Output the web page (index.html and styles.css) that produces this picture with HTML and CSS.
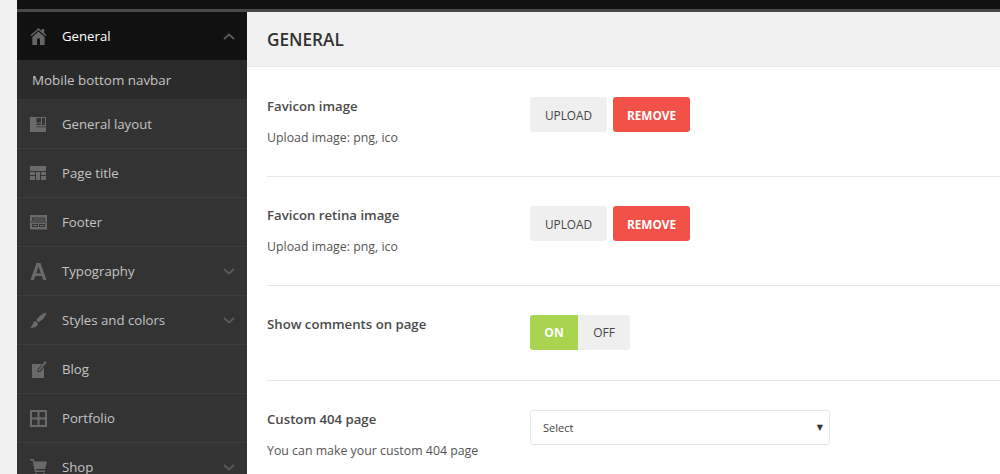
FILE: index.html
```html
<!DOCTYPE html>
<html lang="en">
<head>
<meta charset="utf-8">
<title>General</title>
<link rel="stylesheet" href="styles.css">
</head>
<body>
<div class="shell">
  <div class="topbar"></div>
  <div class="columns">
    <nav class="sidebar">
      <div class="nav-item active">
        <svg class="icon" viewBox="0 0 17 18"><path d="M8.5 0 L0 7.6 L1 8.8 L8.5 2.2 L16 8.8 L17 7.6 L14.5 5.4 V1 H12 V3.2 Z"/><path fill-rule="evenodd" d="M8.5 3.6 L2 9.4 V18 H15 V9.4 Z M7 11 H10 V18 H7 Z"/></svg>
        <span class="nav-label">General</span>
        <svg class="chev" viewBox="0 0 12 7"><path d="M1 6 L6 1.5 L11 6"/></svg>
      </div>
      <div class="sub-item">Mobile bottom navbar</div>
      <div class="nav-item">
        <svg class="icon" viewBox="0 0 17 17"><path fill-rule="evenodd" d="M0 1 H16 V16 H0 Z M6.5 2 V6.5 H11 V2 Z M12 2 V9 H15 V2 Z M6.5 7.5 V9 H11 V7.5 Z M6 10.5 V11.3 H16 V10.5 Z"/></svg>
        <span class="nav-label">General layout</span>
      </div>
      <div class="nav-item">
        <svg class="icon" viewBox="0 0 17 17"><path d="M0 1 H16 V6 H0 Z M0 7 H5 V10 H0 Z M0 11 H5 V15 H0 Z M6 7 H10 V15 H6 Z M11 7 H16 V10 H11 Z M11 11 H16 V15 H11 Z"/></svg>
        <span class="nav-label">Page title</span>
      </div>
      <div class="nav-item">
        <svg class="icon" viewBox="0 0 17 17"><path fill-rule="evenodd" d="M0 1 H17 V15.5 H0 Z M2 3.5 V6.5 H15 V3.5 Z M0.8 7.6 V8.4 H16.2 V7.6 Z M2 10 V13 H8 V10 Z M9 10 V13 H15 V10 Z"/><path d="M3 4.5 H14 V5.5 H3 Z M3 11 H7 V12 H3 Z M10 11 H14 V12 H10 Z"/></svg>
        <span class="nav-label">Footer</span>
      </div>
      <div class="nav-item">
        <svg class="icon" viewBox="0 0 17 17"><path fill-rule="evenodd" d="M6.5 0 H10.5 L16.5 17 H13.2 L11.8 13 H5.2 L3.8 17 H0.5 Z M8.5 3.6 L6.2 10.2 H10.8 Z"/></svg>
        <span class="nav-label">Typography</span>
        <svg class="chev" viewBox="0 0 12 7"><path d="M1 1 L6 5.5 L11 1"/></svg>
      </div>
      <div class="nav-item">
        <svg class="icon" viewBox="0 0 17 17"><path d="M16.5 0.5 C12.5 1.5 8.5 4.5 6.3 8.3 L8.6 10.3 C12.2 8.5 15.5 4.5 16.5 0.5 Z"/><path d="M5.4 9 C2.8 9.6 3 13.5 0 15.5 C3.6 16.4 8 15 7.8 11 Z"/></svg>
        <span class="nav-label">Styles and colors</span>
        <svg class="chev" viewBox="0 0 12 7"><path d="M1 1 L6 5.5 L11 1"/></svg>
      </div>
      <div class="nav-item">
        <svg class="icon" viewBox="0 0 17 17"><path d="M2 3 H12 L7.5 8.5 V11 H10 L14 6.5 V17 H2 Z"/><path d="M15 0 L16.7 1.3 L9.7 10 H8.5 V8.7 Z"/></svg>
        <span class="nav-label">Blog</span>
      </div>
      <div class="nav-item">
        <svg class="icon" viewBox="0 0 17 17"><path fill-rule="evenodd" d="M0 0 H17 V17 H0 Z M2 2 V7.5 H7.5 V2 Z M9.5 2 V7.5 H15 V2 Z M2 9.5 V15 H7.5 V9.5 Z M9.5 9.5 V15 H15 V9.5 Z"/></svg>
        <span class="nav-label">Portfolio</span>
      </div>
      <div class="nav-item">
        <svg class="icon" viewBox="0 0 17 17"><path d="M0 0 H3.5 L4.3 2.5 H17 L15 10 H5.8 L6.2 11.5 H15 V13 H5 L2.5 1.5 H0 Z"/><path d="M5 14 H7 V17 H5 Z M13 14 H15 V17 H13 Z"/></svg>
        <span class="nav-label">Shop</span>
        <svg class="chev" viewBox="0 0 12 7"><path d="M1 1 L6 5.5 L11 1"/></svg>
      </div>
    </nav>
    <main class="content">
      <header class="content-head"><h1 class="content-title">GENERAL</h1></header>
      <section class="row row-a">
        <div class="row-text">
          <div class="row-label">Favicon image</div>
          <div class="row-hint">Upload image: png, ico</div>
        </div>
        <div class="controls">
          <button class="btn btn-grey">UPLOAD</button>
          <button class="btn btn-red">REMOVE</button>
        </div>
      </section>
      <section class="row row-a">
        <div class="row-text">
          <div class="row-label">Favicon retina image</div>
          <div class="row-hint">Upload image: png, ico</div>
        </div>
        <div class="controls">
          <button class="btn btn-grey">UPLOAD</button>
          <button class="btn btn-red">REMOVE</button>
        </div>
      </section>
      <section class="row row-b">
        <div class="row-text">
          <div class="row-label">Show comments on page</div>
        </div>
        <div class="toggle">
          <span class="toggle-on">ON</span>
          <span class="toggle-off">OFF</span>
        </div>
      </section>
      <section class="row row-last">
        <div class="row-text">
          <div class="row-label">Custom 404 page</div>
          <div class="row-hint">You can make your custom 404 page</div>
        </div>
        <div class="select"><span>Select</span><span class="caret">▼</span></div>
      </section>
    </main>
  </div>
</div>
</body>
</html>
```

FILE: styles.css
```css
* { box-sizing: border-box; }
html, body { margin: 0; height: 100%; overflow: hidden; }
body { background: #f1f1f1; font-family: "Open Sans", "Liberation Sans", sans-serif; color: #444; }
.shell { margin-left: 17px; height: 474px; overflow: hidden; }
.topbar { height: 12px; background: #111; border-bottom: 3px solid #4a4a4a; }
.columns { display: flex; height: 462px; }
.sidebar { width: 230px; flex: none; background: #333; }
.nav-item { height: 49px; display: flex; align-items: center; padding: 0 12px 0 13px; border-bottom: 1px solid #3d3d3d; color: #c4c4c4; font-size: 13.2px; }
.nav-item.active { height: 48px; background: #111; color: #fff; border-bottom: 0; }
.icon { width: 17px; height: 17px; margin-right: 15px; flex: none; fill: #6a6a6a; }
.active .icon { fill: #666; }
.nav-label { flex: 1; }
.chev { width: 12px; height: 7px; fill: none; stroke: #5a5a5a; stroke-width: 1.8; flex: none; }
.sub-item { height: 40px; background: #2b2b2b; border-bottom: 1px solid #333; color: #c4c4c4; font-size: 13.4px; padding-left: 15px; display: flex; align-items: center; }
.content { flex: 1; background: #fff; min-width: 0; }
.content-head { height: 55px; margin-bottom: 1px; background: #f1f1f1; border-bottom: 1px solid #e4e4e4; padding-left: 20px; display: flex; align-items: center; }
.content-title { margin: 0; font-size: 17.2px; font-weight: 600; color: #333; }
.row { margin-left: 20px; display: flex; padding-top: 29px; border-bottom: 1px solid #e6e6e6; }
.row-a { height: 109px; }
.row-b { height: 95px; }
.row-last { border-bottom: 0; }
.row-text { width: 263px; flex: none; }
.row-label { font-size: 13.2px; font-weight: 600; color: #4a4a4a; line-height: 18px; }
.row-hint { font-size: 12.35px; color: #555; line-height: 18px; margin-top: 14px; }
.controls { display: flex; gap: 6px; }
.btn { width: 77px; height: 35px; border: 0; border-radius: 3px; padding: 0; font-family: inherit; font-size: 11.8px; }
.btn-grey { background: #efefef; color: #444; }
.btn-red { background: #f15146; color: #fff; font-weight: 700; }
.toggle { display: flex; height: 35px; width: 100px; border-radius: 3px; overflow: hidden; font-size: 12px; }
.toggle-on { width: 48px; background: #a9d44f; color: #fff; font-weight: 700; display: flex; align-items: center; justify-content: center; }
.toggle-off { flex: 1; background: #efefef; color: #444; display: flex; align-items: center; justify-content: center; }
.select { width: 300px; height: 35px; border: 1px solid #e6e6e6; border-radius: 3px; background: #fff; display: flex; align-items: center; justify-content: space-between; padding: 0 6px 0 12px; font-size: 11px; color: #444; }
.caret { font-size: 8px; color: #333; font-family: "DejaVu Sans", sans-serif; }
```
